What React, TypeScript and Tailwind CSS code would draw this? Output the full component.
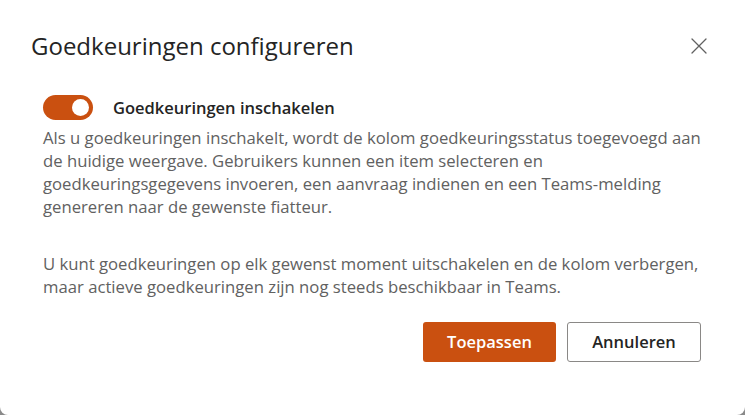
import React from 'react';

const font = { fontFamily: '"Open Sans", "Noto Sans", Arial, sans-serif' };

const CloseIcon = () => (
  <svg width="16" height="16" viewBox="0 0 16 16" fill="none">
    <path d="M1 1L15 15M15 1L1 15" stroke="#616161" strokeWidth="1.3" strokeLinecap="round" />
  </svg>
);

const Toggle = ({ on }: { on: boolean }) => (
  <div
    className={`flex items-center w-[50px] h-[25px] rounded-full px-[4px] ${
      on ? 'bg-[#ca5010] justify-end' : 'bg-white border border-gray-500 justify-start'
    }`}
  >
    <div className="w-[17px] h-[17px] rounded-full bg-white" />
  </div>
);

export default function App() {
  return (
    <div className="w-[745px] h-[415px] bg-[#8a8a8a] overflow-hidden" style={font}>
      <div className="h-full w-full bg-white rounded-b-[8px] flex flex-col">
        {/* Header */}
        <div className="flex items-start justify-between pt-[29px] pl-[31px] pr-[38px]">
          <h1 className="text-[24px] leading-[34px] font-medium text-[#242424]">
            Goedkeuringen configureren
          </h1>
          <button className="mt-[9px]">
            <CloseIcon />
          </button>
        </div>

        {/* Body */}
        <div className="pl-[43px] pr-[40px]">
          <div className="flex items-center gap-[20px] mt-[32px]">
            <Toggle on />
            <span className="text-[16.5px] leading-[25px] font-semibold text-[#242424]">
              Goedkeuringen inschakelen
            </span>
          </div>

          <p className="mt-[6px] text-[16.7px] leading-[23px] text-[#616161] whitespace-nowrap">
            Als u goedkeuringen inschakelt, wordt de kolom goedkeuringsstatus toegevoegd aan
            <br />
            de huidige weergave. Gebruikers kunnen een item selecteren en
            <br />
            goedkeuringsgegevens invoeren, een aanvraag indienen en een Teams-melding
            <br />
            genereren naar de gewenste fiatteur.
          </p>

          <p className="mt-[34px] text-[16.7px] leading-[23px] text-[#616161] whitespace-nowrap">
            U kunt goedkeuringen op elk gewenst moment uitschakelen en de kolom verbergen,
            <br />
            maar actieve goedkeuringen zijn nog steeds beschikbaar in Teams.
          </p>

          <div className="flex justify-end gap-[11px] mt-[24px] pr-[4px]">
            <button className="w-[133px] h-[40px] rounded-[3px] bg-[#ca5010] text-white text-[16.5px] font-semibold">
              Toepassen
            </button>
            <button className="w-[134px] h-[40px] rounded-[3px] bg-white border border-[#8a8886] text-[#242424] text-[16.5px] font-semibold">
              Annuleren
            </button>
          </div>
        </div>
      </div>
    </div>
  );
}
